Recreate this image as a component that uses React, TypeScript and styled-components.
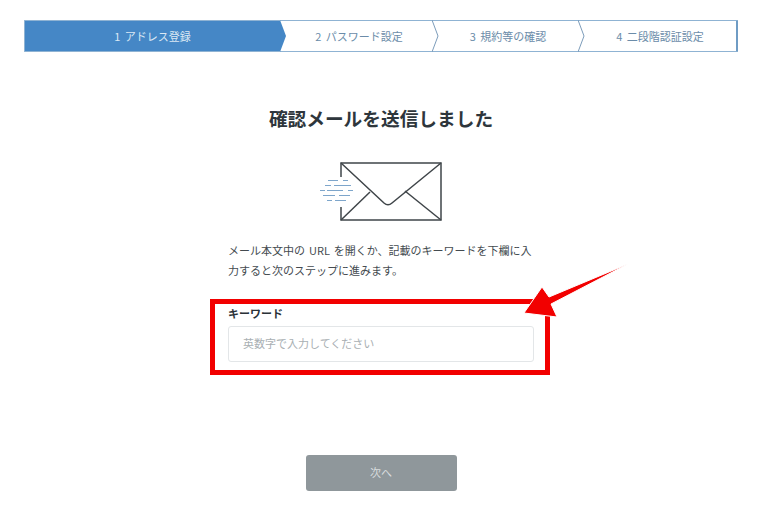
import React from "react";
import styled, { createGlobalStyle } from "styled-components";

const Global = createGlobalStyle`
  html, body { margin: 0; padding: 0; background: #fff; }
  body { font-family: "Noto Sans CJK JP", "Noto Sans", sans-serif; color: #3a4248; }
  * { box-sizing: border-box; }
`;

const Page = styled.div`
  position: relative;
  width: 773px;
  height: 506px;
  overflow: hidden;
  padding: 20px 35px 0 24px;
  display: flex;
  flex-direction: column;
  align-items: stretch;
`;

const Steps = styled.ol`
  list-style: none;
  flex: none;
  margin: 0;
  padding: 0;
  height: 32px;
  display: grid;
  grid-template-columns: 255px 152px 146px 1fr;
  background: #fff;
  border: 1px solid #8fb3d3;
  border-right: 2px solid #6f9cc4;
  border-radius: 1px;
`;

const Step = styled.li<{ $active?: boolean }>`
  position: relative;
  display: flex;
  align-items: center;
  justify-content: center;
  padding-left: ${(p) => (p.$active ? "0" : "6px")};
  font-size: 11px;
  word-spacing: 2px;
  font-weight: 400;
  color: ${(p) => (p.$active ? "#dbe8f4" : "#6b8ca9")};
  background: ${(p) => (p.$active ? "#4587c6" : "transparent")};
`;

const Chevron = styled.svg`
  position: absolute;
  top: -1px;
  right: -7px;
  width: 7px;
  height: 32px;
  z-index: 1;
`;

const Column = styled.main`
  align-self: center;
  flex: none;
  width: 306px;
  display: flex;
  flex-direction: column;
`;

const Title = styled.h1`
  margin: 52px -20px 0;
  font-size: 18.7px;
  line-height: 28px;
  font-weight: 700;
  text-align: center;
  color: #2e363c;
  white-space: nowrap;
`;

const Illustration = styled.svg`
  display: block;
  flex: none;
  align-self: center;
  width: 124px;
  height: 62px;
  margin: 28px 0 0 -2px;
`;

const Lead = styled.p`
  margin: 18px 0 0;
  font-size: 11px;
  line-height: 20px;
  font-weight: 400;
  word-spacing: 1.5px;
  color: #444b50;
  white-space: nowrap;
`;

const Label = styled.label`
  display: block;
  margin-top: 24px;
  font-size: 11px;
  line-height: 18px;
  font-weight: 700;
  color: #2b3238;
`;

const Input = styled.input`
  display: block;
  flex: none;
  width: 306px;
  height: 36px;
  margin-top: 4px;
  padding: 0 14px 2px;
  border: 1px solid #e3e6e8;
  border-radius: 3px;
  background: #fff;
  font-family: inherit;
  font-size: 11px;
  outline: none;
  &::placeholder { color: #a9afb3; opacity: 1; }
`;

const NextButton = styled.button`
  align-self: center;
  flex: none;
  width: 151px;
  height: 36px;
  margin: 93px 0 0 0;
  padding: 0 0 2px;
  border: none;
  border-radius: 3px;
  background: #8f979b;
  color: #d8dcde;
  font-family: inherit;
  font-size: 11px;
`;

const Highlight = styled.div`
  position: absolute;
  left: 210px;
  top: 299px;
  width: 340px;
  height: 76px;
  border: 5px solid #f20000;
  pointer-events: none;
`;

const Arrow = styled.svg`
  position: absolute;
  left: 515px;
  top: 255px;
  width: 120px;
  height: 70px;
  pointer-events: none;
`;

const steps = ["1 アドレス登録", "2 パスワード設定", "3 規約等の確認", "4 二段階認証設定"];

export default function App() {
  return (
    <Page>
      <Global />
      <Steps>
        {steps.map((s, i) => (
          <Step key={s} $active={i === 0}>
            {s}
            {i < 3 && (
              <Chevron viewBox="0 0 7 32" aria-hidden="true">
                {i === 0 ? (
                  <path d="M0 0 L6 16 L0 32 Z" fill="#4587c6" />
                ) : (
                  <path d="M0 0 L6 16 L0 32" fill="none" stroke="#7c9cba" strokeWidth="1" />
                )}
              </Chevron>
            )}
          </Step>
        ))}
      </Steps>
      <Column>
        <Title>確認メールを送信しました</Title>
        <Illustration viewBox="0 0 124 62" aria-hidden="true">
          <g fill="none" stroke="#3f4549" strokeWidth="1.5">
            <path d="M23 17 V3 H123 V60 H23 V47" />
            <path d="M23 3 L66 43 Q70 46.5 74 43 L123 3" />
            <path d="M23 60 L52 32" />
            <path d="M123 60 L87 31" />
          </g>
          <g fill="none" stroke="#7ea6cb" strokeWidth="1.2">
            <path d="M10 20.5 H20 M25 20.5 H30" />
            <path d="M7 25.5 H13 M16 25.5 H33" />
            <path d="M2 30.5 H7 M9 30.5 H25 M30 30.5 H35" />
            <path d="M5 35.5 H17 M21 35.5 H32" />
            <path d="M9 40.5 H14 M17 40.5 H28" />
          </g>
        </Illustration>
        <Lead>
          メール本文中の URL を開くか、記載のキーワードを下欄に入
          <br />
          力すると次のステップに進みます。
        </Lead>
        <Label htmlFor="keyword">キーワード</Label>
        <Input id="keyword" placeholder="英数字で入力してください" />
        <NextButton type="button">次へ</NextButton>
      </Column>
      <Highlight />
      <Arrow viewBox="0 0 120 70" aria-hidden="true">
        <path
          d="M113 9 L34 42 L27 32 L9 58 L42 62 L36 49 Z"
          fill="#f20000"
          stroke="#fff"
          strokeWidth="1"
          strokeLinejoin="miter"
        />
      </Arrow>
    </Page>
  );
}
